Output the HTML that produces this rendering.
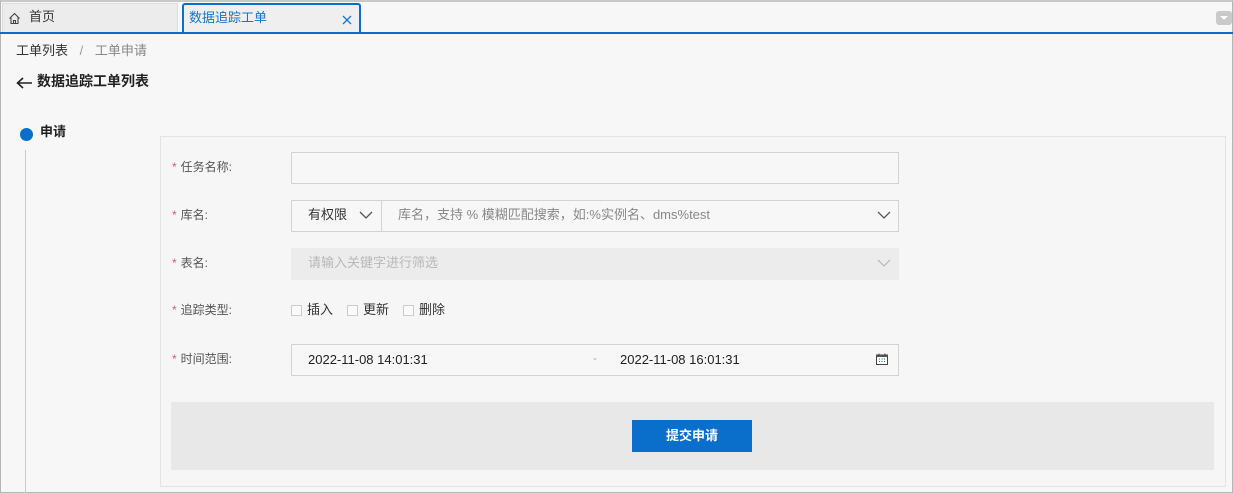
<!DOCTYPE html>
<html><head><meta charset="utf-8"><style>
*{box-sizing:border-box;margin:0;padding:0}
body{width:1233px;height:493px;overflow:hidden;background:#f7f7f7;font-family:"Liberation Sans","Noto Sans CJK SC",sans-serif;font-size:12px;color:#333;position:relative;line-height:1.2}
.frame{position:absolute;left:0;top:0;width:1233px;height:493px;border:1px solid #b5b5b5;border-top:2px solid #c8c8c8}
.abs{position:absolute}
.tabline{left:0;top:32px;width:1233px;height:2px;background:#0a6fcb}
.tab1{left:2px;top:3px;width:176px;height:29px;background:#ececec;border:1px solid #ddd;border-bottom:none}
.tab2{left:182px;top:3px;width:179px;height:31px;background:#efefef;border:2px solid #0a6fcb;border-bottom:none;border-radius:3px 3px 0 0;color:#1a74c9;font-size:13px;padding:5px 0 0 5px}
.in{border:1px solid #d3d3d3;background:#f7f7f7;height:32px}
.lbl{left:172px;font-size:12px;color:#555}
.lbl b{color:#e2585d;font-weight:normal;margin-right:4px}
.cb{width:11px;height:11px;border:1px solid #ccc;background:#fafafa}
</style></head><body>
<div class="frame"></div>
<div class="abs tab1"><svg class="abs" style="left:5px;top:8px" width="13" height="13" viewBox="0 0 13 13"><path d="M1.5 6.5 L6.5 1.5 L11.5 6.5 M3 5 V11.5 H10 V5 M5.5 11.5 V8.5 H7.5 V11.5" fill="none" stroke="#444" stroke-width="1.1"/></svg><span class="abs" style="left:26px;top:5px;font-size:13px;color:#333">首页</span></div>
<div class="abs tab2">数据追踪工单<svg class="abs" style="left:158px;top:10px" width="10" height="10"><path d="M1 1L9 9M9 1L1 9" stroke="#1a74c9" stroke-width="1.3"/></svg></div>
<div class="abs tabline"></div>
<div class="abs" style="left:1216px;top:11px;width:16px;height:14px;background:#c9c9c9;border-radius:3px"><div class="abs" style="left:4px;top:5px;border-left:4px solid transparent;border-right:4px solid transparent;border-top:4px solid #fff"></div></div>

<div class="abs" style="left:16px;top:43px;font-size:13px;color:#333">工单列表 <span style="color:#999;margin:0 8px">/</span> <span style="color:#888">工单申请</span></div>
<svg class="abs" style="left:16px;top:77px" width="17" height="12"><path d="M16 6H2M7 1L1.5 6L7 11" fill="none" stroke="#222" stroke-width="1.6"/></svg>
<div class="abs" style="left:37px;top:73px;font-size:14px;color:#222;font-weight:bold">数据追踪工单列表</div>

<div class="abs" style="left:20px;top:128px;width:13px;height:13px;border-radius:50%;background:#0a6fcb"></div>
<div class="abs" style="left:40px;top:124px;font-size:13px;font-weight:bold;color:#222">申请</div>
<div class="abs" style="left:25px;top:150px;width:1px;height:343px;background:#ccc"></div>

<div class="abs" style="left:160px;top:136px;width:1066px;height:351px;border:1px solid #e3e3e3;background:#f6f6f6"></div>

<div class="abs lbl" style="top:160px"><b>*</b>任务名称:</div>
<div class="abs in" style="left:291px;top:152px;width:608px"></div>

<div class="abs lbl" style="top:208px"><b>*</b>库名:</div>
<div class="abs in" style="left:291px;top:200px;width:608px"></div>
<div class="abs" style="left:381px;top:201px;width:1px;height:30px;background:#d3d3d3"></div>
<div class="abs" style="left:308px;top:207px;font-size:13px;color:#333">有权限</div>
<svg class="abs" style="left:359px;top:211px" width="14" height="9"><path d="M1 1 L7 7 L13 1" fill="none" stroke="#555" stroke-width="1.3"/></svg>
<div class="abs" style="left:398px;top:207px;font-size:13px;color:#888">库名，支持 % 模糊匹配搜索，如:%实例名、dms%test</div>
<svg class="abs" style="left:877px;top:211px" width="14" height="9"><path d="M1 1 L7 7 L13 1" fill="none" stroke="#555" stroke-width="1.3"/></svg>

<div class="abs lbl" style="top:256px"><b>*</b>表名:</div>
<div class="abs" style="left:291px;top:248px;width:608px;height:32px;background:#ececec"></div>
<div class="abs" style="left:308px;top:255px;font-size:13px;color:#b8b8b8">请输入关键字进行筛选</div>
<svg class="abs" style="left:877px;top:259px" width="14" height="9"><path d="M1 1 L7 7 L13 1" fill="none" stroke="#bbb" stroke-width="1.3"/></svg>

<div class="abs lbl" style="top:303px"><b>*</b>追踪类型:</div>
<div class="abs cb" style="left:291px;top:305px"></div><div class="abs" style="left:307px;top:302px;font-size:13px">插入</div>
<div class="abs cb" style="left:347px;top:305px"></div><div class="abs" style="left:363px;top:302px;font-size:13px">更新</div>
<div class="abs cb" style="left:403px;top:305px"></div><div class="abs" style="left:419px;top:302px;font-size:13px">删除</div>

<div class="abs lbl" style="top:352px"><b>*</b>时间范围:</div>
<div class="abs in" style="left:291px;top:344px;width:608px"></div>
<div class="abs" style="left:308px;top:352px;font-size:13px;color:#222">2022-11-08 14:01:31</div>
<div class="abs" style="left:593px;top:351px;color:#aaa">-</div>
<div class="abs" style="left:620px;top:352px;font-size:13px;color:#222">2022-11-08 16:01:31</div>
<svg class="abs" style="left:876px;top:353px" width="12" height="12" viewBox="0 0 12 12"><rect x="0.5" y="2" width="11" height="9.5" fill="#fff" stroke="#444"/><rect x="0.5" y="2" width="11" height="2" fill="#555"/><path d="M3 0.5V3M9 0.5V3" stroke="#444"/><path d="M3 6h1M5.5 6h1M8 6h1M3 8.5h1M5.5 8.5h1M8 8.5h1" stroke="#1a74c9"/></svg>

<div class="abs" style="left:171px;top:402px;width:1043px;height:68px;background:#e8e8e8"></div>
<div class="abs" style="left:632px;top:420px;width:120px;height:32px;background:#0a6fcb;color:#fff;font-size:13px;font-weight:bold;text-align:center;line-height:32px">提交申请</div>
</body></html>
